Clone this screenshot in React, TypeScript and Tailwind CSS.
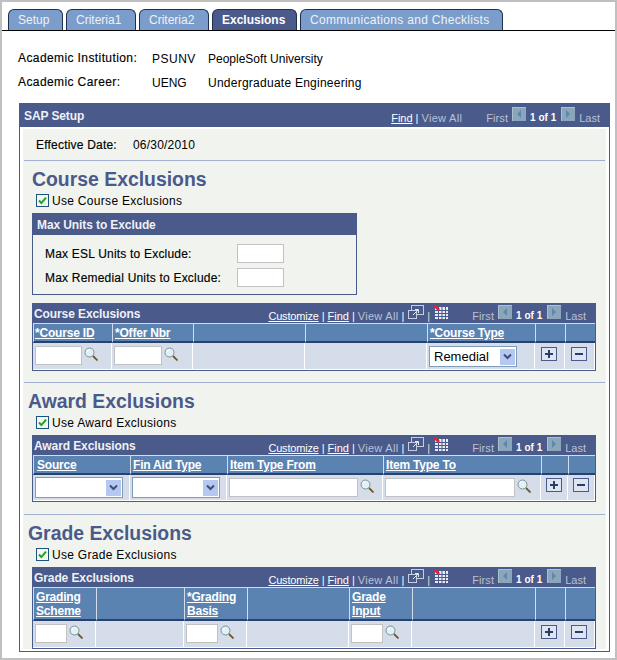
import React from "react";

const Magnifier = () => (
  <svg width="14" height="14" viewBox="0 0 14 14" className="shrink-0 mt-[1px]">
    <circle cx="5.5" cy="5.5" r="4.5" fill="#dff1f7" stroke="#7f8f96" strokeWidth="1" />
    <path d="M3 5a3 3 0 0 1 2.5-2.2" fill="none" stroke="#ffffff" strokeWidth="1" />
    <path d="M9 9l4.5 4.5" stroke="#6b5a2a" strokeWidth="1.8" />
  </svg>
);

const PageArrow = ({ dir }: { dir: "left" | "right" }) => (
  <svg width="14" height="14" viewBox="0 0 14 14" className="shrink-0">
    <rect width="14" height="14" fill="#8ba6ba" />
    <path d="M0 0h14v1H1v13H0z" fill="#a9c0cf" />
    {dir === "left" ? <path d="M9 3v8L5 7z" fill="#5f87ad" /> : <path d="M5 3v8l4-4z" fill="#5f87ad" />}
  </svg>
);

const PopupIcon = () => (
  <svg width="16" height="15" viewBox="0 0 16 15" className="shrink-0">
    <rect x="3.5" y="0.5" width="12" height="9" fill="#4a5a8a" stroke="#c5cde0" />
    <rect x="0.5" y="5.5" width="8" height="8" fill="#4a5a8a" stroke="#c5cde0" />
    <path d="M5 10l5-5M7 4.5h3.5V8" fill="none" stroke="#e4e8f2" />
  </svg>
);

const GridIcon = () => (
  <svg width="15" height="14" viewBox="0 0 15 14" className="shrink-0">
    <rect x="2" y="2" width="13" height="12" fill="#e8ebf6" />
    <path d="M5.5 2v12M9 2v12M12.5 2v12M2 5.5h13M2 8.5h13M2 11.5h13" stroke="#4a5a8a" strokeWidth="1" />
    <path d="M0 0h4l1 2 2 2-2 2-3-3z" fill="#e0262c" />
  </svg>
);

const Check = ({ label }: { label: string }) => (
  <div className="flex items-center h-[15px] mt-[3px] ml-[13px]">
    <svg width="13" height="13" viewBox="0 0 13 13" className="shrink-0">
      <rect x="0.5" y="0.5" width="12" height="12" fill="#f4f6f2" stroke="#1c5180" />
      <path d="M3 6.5l2.4 2.6L10 3.6" fill="none" stroke="#21a121" strokeWidth="2" />
    </svg>
    <span className="ml-[3px] mt-[1px] text-[12px] tracking-[0.3px] text-black">{label}</span>
  </div>
);

const TextBox = ({ w }: { w: string }) => (
  <div className={`h-[19px] bg-white border border-[#c2c2c2] ${w}`} />
);

const Lookup = ({ w }: { w: string }) => (
  <div className="flex items-start gap-[2px]">
    <TextBox w={w} />
    <Magnifier />
  </div>
);

const Select = ({ w, value, pull }: { w: string; value?: string; pull?: string }) => (
  <div className={`flex items-center justify-between h-[21px] bg-white border-[1.5px] border-[#7f9db9] pl-[4px] pr-[1px] ${w} ${pull ?? ""}`}>
    <span className="text-[13px] leading-[15px] text-black">{value}</span>
    <div className="w-[15px] h-[16px] bg-[#b5c8f2] flex items-center justify-center">
      <svg width="9" height="7" viewBox="0 0 9 7">
        <path d="M1 1.5l3.5 3.5L8 1.5" fill="none" stroke="#3e4f72" strokeWidth="2" />
      </svg>
    </div>
  </div>
);

const RowButton = ({ minus, top }: { minus?: boolean; top?: string }) => (
  <div className={`w-[16px] h-[14px] border border-[#4a5a8a] bg-[#dfe5f0] flex items-center justify-center ${top ?? "mt-[1px]"}`}>
    <svg width="10" height="10" viewBox="0 0 10 10">
      <path d={minus ? "M1 5h8" : "M1 5h8M5 1v8"} stroke="#26406e" strokeWidth="2" />
    </svg>
  </div>
);

const Pager = () => (
  <div className="flex items-start ml-[24px] text-[11px] leading-[16px] text-[#b9c2d6]">
    <span className="mt-[3px] tracking-[0.1px]">First</span>
    <span className="ml-[4px]"><PageArrow dir="left" /></span>
    <span className="mt-[3px] ml-[4px] mr-[5px] text-[10px] font-bold text-white">1 of 1</span>
    <PageArrow dir="right" />
    <span className="mt-[3px] ml-[4px]">Last</span>
  </div>
);

const GridTitle = ({ title }: { title: string }) => (
  <div className="flex items-start justify-between h-[19px] pl-[1px] pr-[9px] pt-[1px]">
    <span className="mt-[1px] text-[12px] leading-[16px] tracking-[-0.1px] font-bold text-[#eef1f7]">{title}</span>
    <div className="flex items-start text-[11px] leading-[16px] text-white">
      <span className="mt-[3px] underline tracking-[-0.2px]">Customize</span>
      <span className="mt-[3px] mx-[3px]">|</span>
      <span className="mt-[3px] underline">Find</span>
      <span className="mt-[3px] mx-[3px]">|</span>
      <span className="mt-[3px] tracking-[0.3px] text-[#b9c2d6]">View All</span>
      <span className="mt-[3px] ml-[3px] mr-[4px]">|</span>
      <PopupIcon />
      <span className="mt-[3px] mx-[3px] text-[#e8d8c8]">|</span>
      <GridIcon />
      <Pager />
    </div>
  </div>
);

const HeadCell = ({ children, left }: { children?: React.ReactNode; left?: string }) => (
  <div className={`border-t border-l border-[#d3dcea] border-b-2 border-b-[#27426f] bg-[#5b83b2] text-[12px] tracking-[-0.2px] leading-[14px] font-bold text-white underline py-[2px] ${left ?? "pl-[2px]"}`}>
    {children}
  </div>
);

const BodyCell = ({ children, left }: { children?: React.ReactNode; left?: string }) => (
  <div className={`flex items-start border-r border-b border-white bg-[#d5dcea] pt-[3px] ${left ?? "pl-[2px]"}`}>
    {children}
  </div>
);

const Grid = ({ title, cols, mt, children }: { title: string; cols: string; mt: string; children: React.ReactNode }) => (
  <div className={`ml-[9px] w-[564px] border border-[#4a5a8a] bg-[#4a5a8a] ${mt}`}>
    <GridTitle title={title} />
    <div className={`grid ${cols}`}>{children}</div>
  </div>
);

const Heading = ({ children, ml }: { children: string; ml: string }) => (
  <div className={`h-[22px] mt-[7px] text-[19.4px] leading-[22px] font-bold text-[#4a5a8a] ${ml}`}>{children}</div>
);

const Divider = ({ mt }: { mt: string }) => <div className={`h-[1px] mx-[1px] bg-[#a3afd0] ${mt}`} />;

const labelText = "[-webkit-text-stroke:0.15px_black]";

const UnitRow = ({ label, mt }: { label: string; mt: string }) => (
  <div className={`flex items-center h-[19px] pl-[12px] ${mt}`}>
    <span className={`w-[192px] mt-[1px] text-[12px] tracking-[0.2px] text-black ${labelText}`}>{label}</span>
    <TextBox w="w-[47px]" />
  </div>
);

const tabs = ["Setup", "Criteria1", "Criteria2", "Exclusions", "Communications and Checklists"];
const tabWidths: Record<string, string> = {
  Setup: "w-[55px]",
  Criteria1: "w-[70px]",
  Criteria2: "w-[70px]",
  Exclusions: "w-[85px]",
  "Communications and Checklists": "w-[203px] tracking-[0.3px]",
};

export default function App() {
  return (
    <div className="w-[617px] h-[660px] border-2 border-[#c0c0c0] bg-white font-['Liberation_Sans',Arial,sans-serif] overflow-hidden">
      <div className="flex gap-[3px] h-[22px] mt-[7px] pl-[6px] border-b border-black">
        {tabs.map((t) => (
          <div
            key={t}
            className={`h-[21px] flex items-center pl-[9px] rounded-t-[6px] border border-b-0 border-[#1f2f4d] text-[12px] ${tabWidths[t]} ${
              t === "Exclusions" ? "bg-[#4a5a8a] font-bold text-white" : "bg-[#7b9dcb] text-[#eef2f8]"
            }`}
          >
            {t}
          </div>
        ))}
      </div>

      <div className="mt-[19px] ml-[16px] flex items-center h-[16px] text-[12px] text-black">
        <span className={`w-[134px] tracking-[0.4px] ${labelText}`}>Academic Institution:</span>
        <span className="w-[56px] mt-[1px] tracking-[0.5px]">PSUNV</span>
        <span className="mt-[1px]">PeopleSoft University</span>
      </div>
      <div className="mt-[8px] ml-[16px] flex items-center h-[16px] text-[12px] text-black">
        <span className={`w-[134px] tracking-[0.4px] ${labelText}`}>Academic Career:</span>
        <span className="w-[56px] mt-[1px]">UENG</span>
        <span className="mt-[1px] tracking-[0.25px]">Undergraduate Engineering</span>
      </div>

      <div className="mt-[13px] ml-[17px] w-[591px] h-[549px] border border-[#4a5a8a]">
        <div className="flex items-start justify-between h-[23px] bg-[#4a5a8a] pl-[4px] pr-[9px] pt-[3px]">
          <span className="text-[12px] tracking-[-0.1px] leading-[16px] mt-[1px] font-bold text-[#eef1f7]">SAP Setup</span>
          <div className="flex items-start text-[11px] leading-[16px] text-white">
            <span className="mt-[3px] underline">Find</span>
            <span className="mt-[3px] mx-[3px]">|</span>
            <span className="mt-[3px] tracking-[0.3px] text-[#b9c2d6]">View All</span>
            <Pager />
          </div>
        </div>

        <div className="mx-[3px] mt-[2px] h-[520px] bg-[#f1f3ee]">
          <div className="flex items-center h-[31px] pl-[13px] text-[12px] text-black">
            <span className={`w-[97px] tracking-[0.2px] ${labelText}`}>Effective Date:</span>
            <span className="mt-[1px] tracking-[0.2px]">06/30/2010</span>
          </div>
          <Divider mt="mt-0" />

          <Heading ml="ml-[9px]">Course Exclusions</Heading>
          <Check label="Use Course Exclusions" />
          <div className="ml-[9px] mt-[5px] w-[325px] h-[82px] border border-[#4a5a8a]">
            <div className="flex items-center h-[21px] bg-[#4a5a8a] pl-[4px] pt-[1px] text-[12px] tracking-[-0.1px] font-bold text-[#eef1f7]">
              Max Units to Exclude
            </div>
            <UnitRow label="Max ESL Units to Exclude:" mt="mt-[9px]" />
            <UnitRow label="Max Remedial Units to Exclude:" mt="mt-[5px]" />
          </div>

          <Grid title="Course Exclusions" mt="mt-[8px]" cols="grid-cols-[79px_81px_112px_122px_108px_30px_30px] grid-rows-[20px_27px]">
            <HeadCell left="pl-[1px]">*Course ID</HeadCell>
            <HeadCell>*Offer Nbr</HeadCell>
            <HeadCell />
            <HeadCell />
            <HeadCell>*Course Type</HeadCell>
            <HeadCell />
            <HeadCell />
            <BodyCell><Lookup w="w-[47px]" /></BodyCell>
            <BodyCell><Lookup w="w-[48px]" /></BodyCell>
            <BodyCell />
            <BodyCell />
            <BodyCell><Select w="w-[88px]" value="Remedial" /></BodyCell>
            <BodyCell left="pl-[6px]"><RowButton /></BodyCell>
            <BodyCell left="pl-[6px]"><RowButton minus /></BodyCell>
          </Grid>
          <Divider mt="mt-[11px]" />

          <Heading ml="ml-[5px]">Award Exclusions</Heading>
          <Check label="Use Award Exclusions" />
          <Grid title="Award Exclusions" mt="mt-[5px]" cols="grid-cols-[97px_97px_156px_158px_27px_27px] grid-rows-[20px_26px]">
            <HeadCell left="pl-[3px]">Source</HeadCell>
            <HeadCell>Fin Aid Type</HeadCell>
            <HeadCell>Item Type From</HeadCell>
            <HeadCell>Item Type To</HeadCell>
            <HeadCell />
            <HeadCell />
            <BodyCell><Select w="w-[88px]" pull="-mt-[1px]" /></BodyCell>
            <BodyCell><Select w="w-[88px]" pull="-mt-[1px]" /></BodyCell>
            <BodyCell><Lookup w="w-[129px]" /></BodyCell>
            <BodyCell><Lookup w="w-[130px]" /></BodyCell>
            <BodyCell left="pl-[5px]"><RowButton top="mt-0" /></BodyCell>
            <BodyCell left="pl-[5px]"><RowButton minus top="mt-0" /></BodyCell>
          </Grid>
          <Divider mt="mt-[12px]" />

          <Heading ml="ml-[5px]">Grade Exclusions</Heading>
          <Check label="Use Grade Exclusions" />
          <Grid title="Grade Exclusions" mt="mt-[5px]" cols="grid-cols-[63px_88px_63px_102px_63px_123px_30px_30px] grid-rows-[34px_27px]">
            <HeadCell>Grading Scheme</HeadCell>
            <HeadCell />
            <HeadCell>*Grading Basis</HeadCell>
            <HeadCell />
            <HeadCell>Grade Input</HeadCell>
            <HeadCell />
            <HeadCell />
            <HeadCell />
            <BodyCell><Lookup w="w-[32px]" /></BodyCell>
            <BodyCell />
            <BodyCell><Lookup w="w-[32px]" /></BodyCell>
            <BodyCell />
            <BodyCell><Lookup w="w-[32px]" /></BodyCell>
            <BodyCell />
            <BodyCell left="pl-[6px]"><RowButton /></BodyCell>
            <BodyCell left="pl-[6px]"><RowButton minus /></BodyCell>
          </Grid>
        </div>
      </div>
    </div>
  );
}
